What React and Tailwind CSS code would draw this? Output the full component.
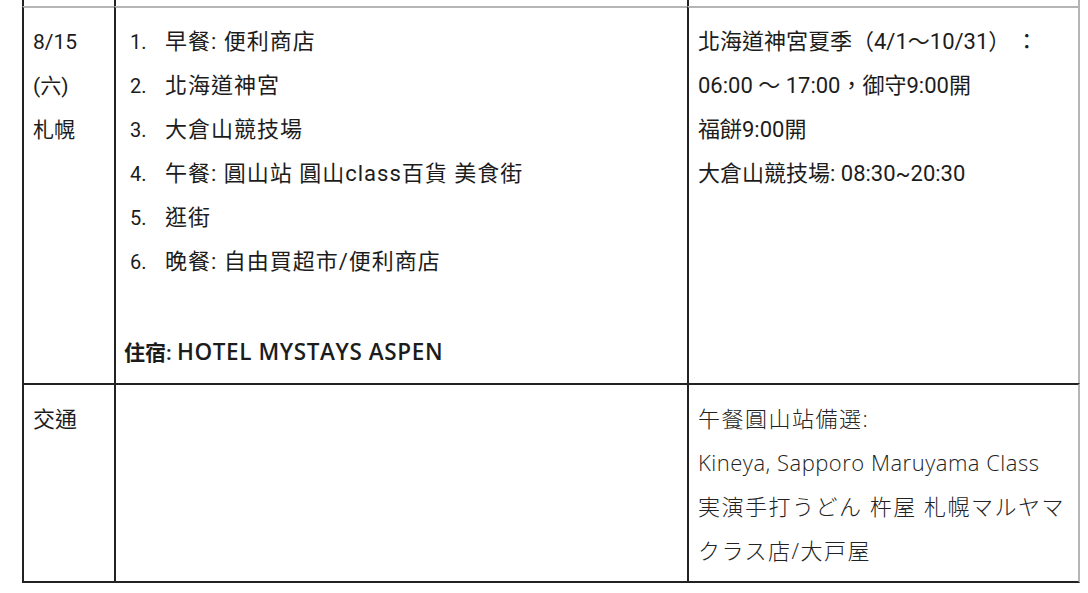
const FONT = { fontFamily: 'Roboto, "Noto Sans CJK TC", "Noto Sans CJK JP", sans-serif' };
const WIDE = { fontFamily: '"Open Sans", "Noto Sans CJK JP", "Noto Sans CJK TC", sans-serif' };

const plan = [
  '早餐: 便利商店',
  '北海道神宮',
  '大倉山競技場',
  '午餐: 圓山站 圓山class百貨 美食街',
  '逛街',
  '晚餐: 自由買超市/便利商店',
];

const App = () => {
  return (
    <div className="w-[1088px] h-[593px] bg-white overflow-hidden text-[22px] leading-[44px] text-[#1c1c1c]" style={FONT}>
      <div className="ml-[22px] w-[1058px] grid grid-cols-[92px_573px_1fr]">
        {/* tail of previous row */}
        <div className="h-[6px] border-l-2 border-[#222]" />
        <div className="h-[6px] border-l-2 border-[#222]" />
        <div className="h-[6px] border-l-2 border-r-2 border-l-[#222] border-r-[#b5b5b5]" />

        {/* 8/15 row */}
        <div className="h-[377px] border-l-2 border-t-2 border-l-[#222] border-t-[#b5b5b5] pl-[9px] pt-[12px] text-[21px]">
          <div>8/15</div>
          <div>(六)</div>
          <div>札幌</div>
        </div>
        <div className="border-l-2 border-t-2 border-l-[#222] border-t-[#b5b5b5] pl-[14px] pt-[12px]">
          {plan.map((item, i) => (
            <div key={i} className="flex">
              <span className="w-[35px] text-[20px]">{i + 1}.</span>
              <span className="tracking-[1px]">{item}</span>
            </div>
          ))}
          <div className="h-[46px]" />
          <div className="-ml-[6px] font-semibold text-[21px]">
            住宿: <span className="text-[22.5px] tracking-[0.6px]" style={WIDE}>HOTEL MYSTAYS ASPEN</span>
          </div>
        </div>
        <div className="border-l-2 border-r-2 border-t-2 border-l-[#222] border-r-[#b5b5b5] border-t-[#b5b5b5] pl-[9px] pt-[12px]">
          <div>北海道神宮夏季（4/1～10/31）  ：</div>
          <div>06:00 ～ 17:00，御守9:00開</div>
          <div>福餅9:00開</div>
          <div>大倉山競技場: 08:30~20:30</div>
        </div>

        {/* 交通 row */}
        <div className="h-[200px] border-l-2 border-t-2 border-b-2 border-[#222] pl-[9px] pt-[13px]">
          交通
        </div>
        <div className="border-l-2 border-t-2 border-b-2 border-[#222]" />
        <div
          className="border-l-2 border-t-2 border-b-2 border-r-2 border-l-[#222] border-t-[#222] border-b-[#222] border-r-[#b5b5b5] pl-[9px] pt-[11px] font-light text-[#222] text-[22px]"
          style={WIDE}
        >
          <div className="tracking-[1.5px]">午餐圓山站備選:</div>
          <div className="tracking-[0.5px]">Kineya, Sapporo Maruyama Class</div>
          <div className="tracking-[1.5px]">実演手打うどん 杵屋 札幌マルヤマ</div>
          <div className="tracking-[1.5px]">クラス店/大戸屋</div>
        </div>
      </div>
    </div>
  );
};

export default App;
